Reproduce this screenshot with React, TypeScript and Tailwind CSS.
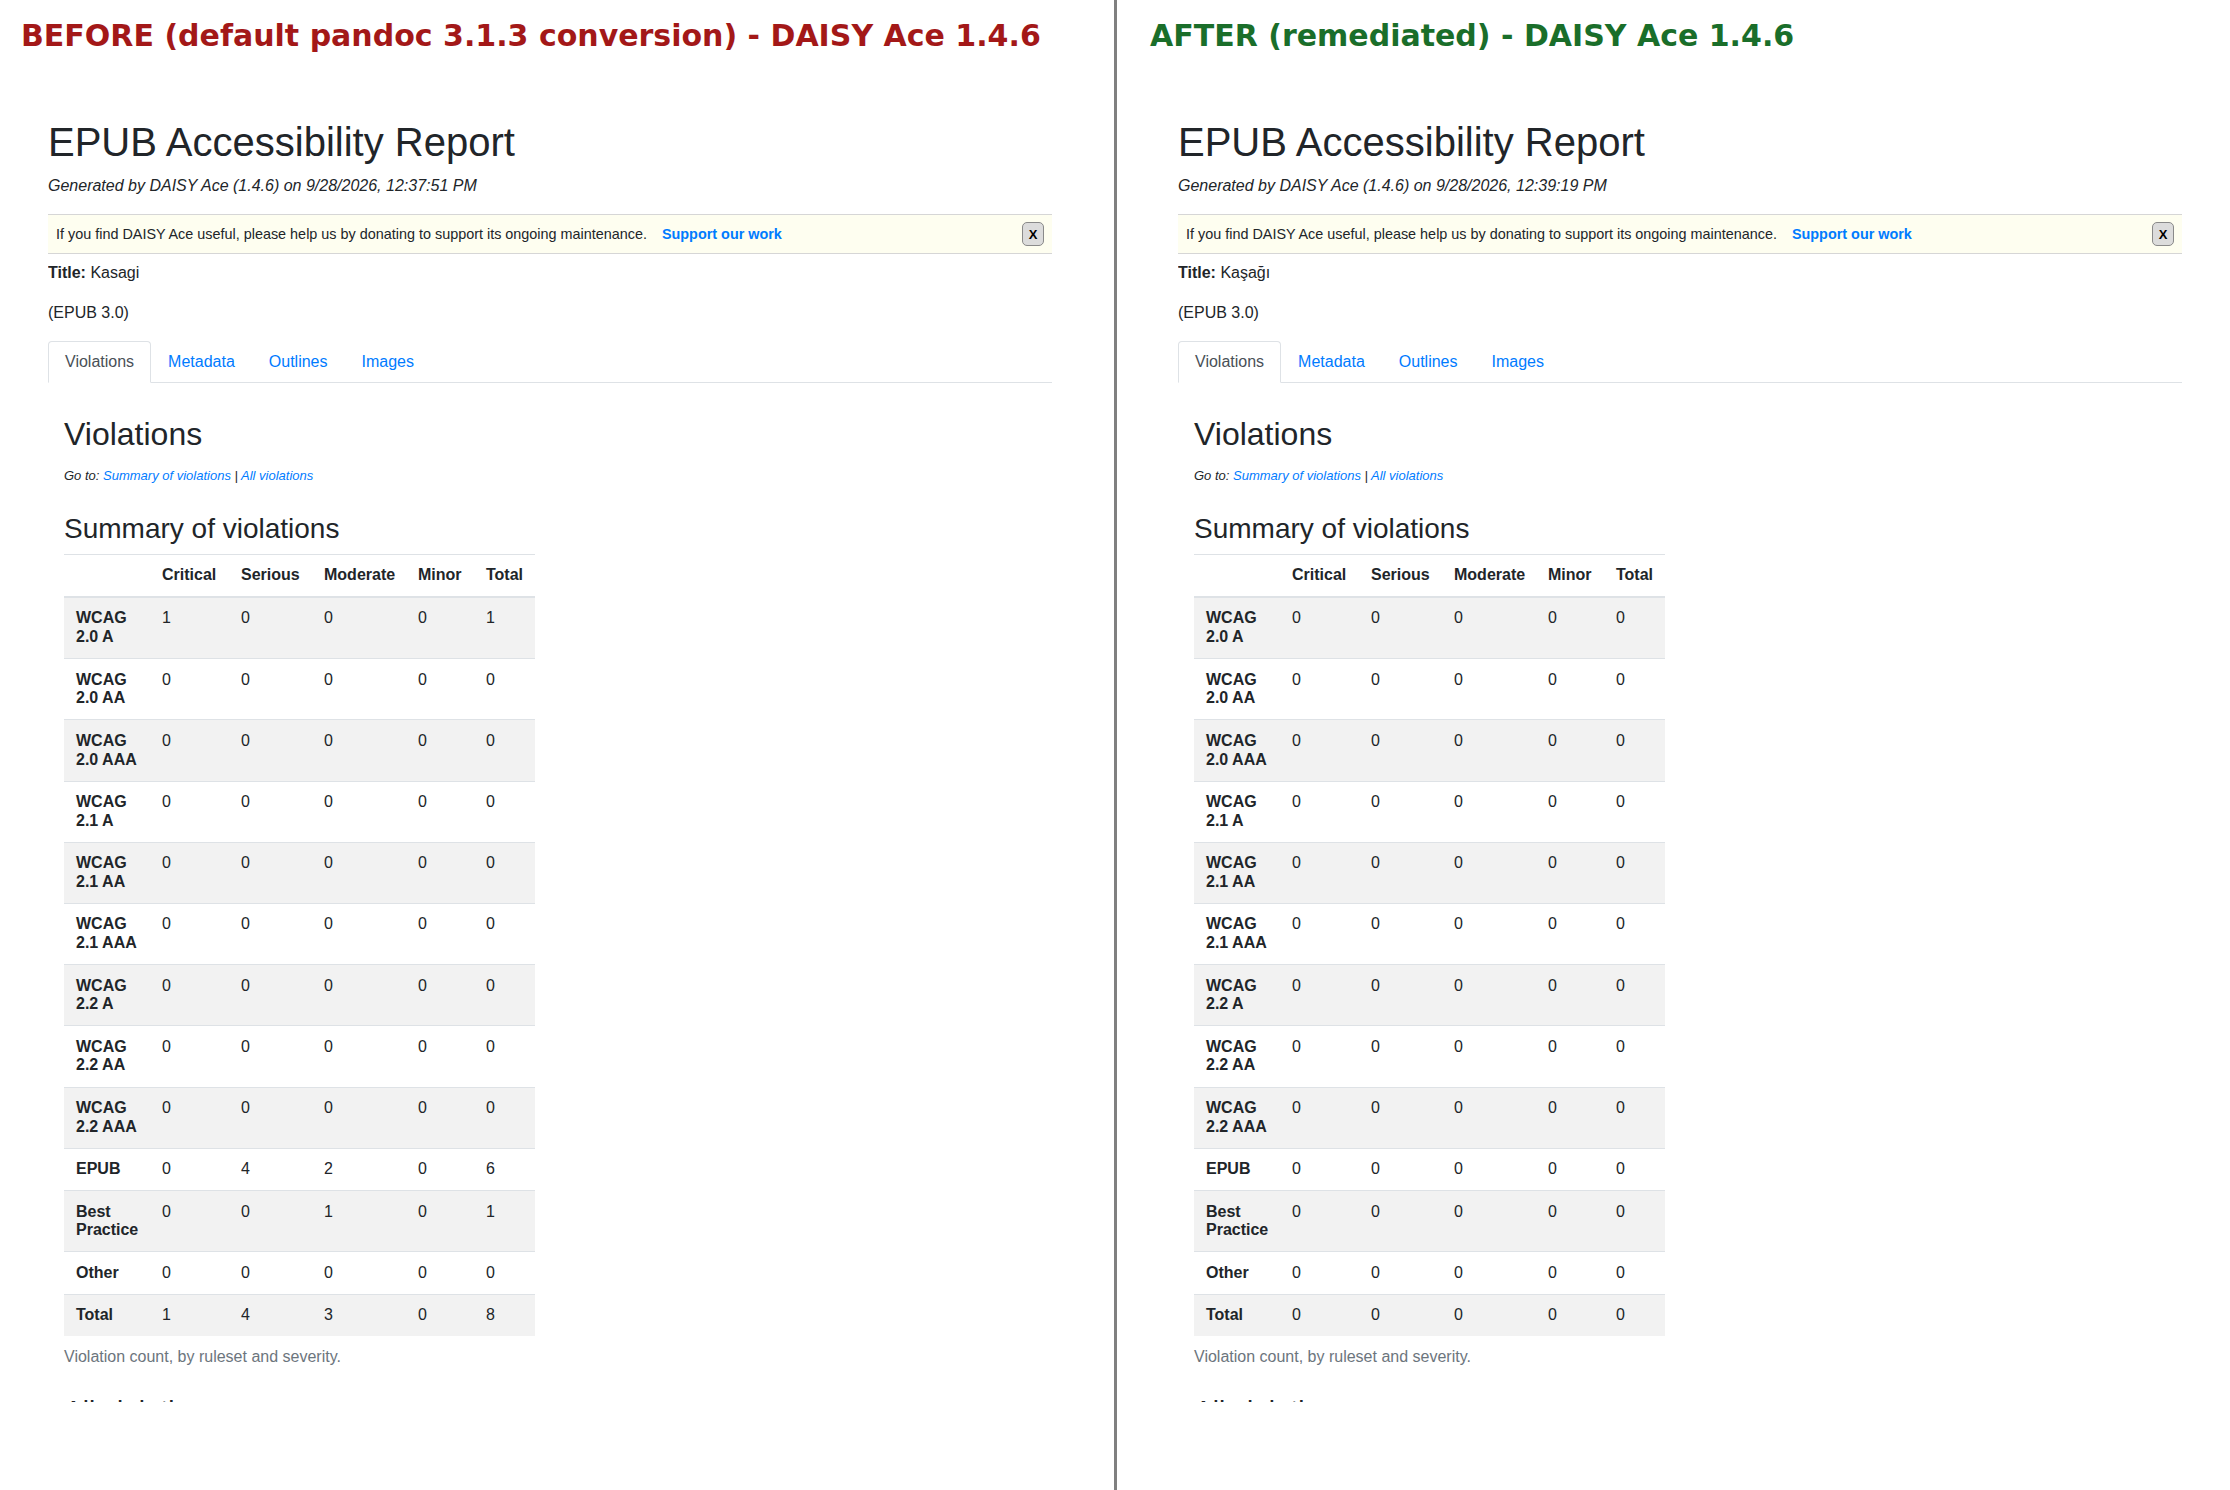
import React from 'react';

const rulesets = [
  'WCAG 2.0 A',
  'WCAG 2.0 AA',
  'WCAG 2.0 AAA',
  'WCAG 2.1 A',
  'WCAG 2.1 AA',
  'WCAG 2.1 AAA',
  'WCAG 2.2 A',
  'WCAG 2.2 AA',
  'WCAG 2.2 AAA',
  'EPUB',
  'Best Practice',
  'Other',
  'Total',
];

const zero = [0, 0, 0, 0, 0];

const beforeCounts: number[][] = [
  [1, 0, 0, 0, 1],
  zero, zero, zero, zero, zero, zero, zero, zero,
  [0, 4, 2, 0, 6],
  [0, 0, 1, 0, 1],
  zero,
  [1, 4, 3, 0, 8],
];

const afterCounts: number[][] = rulesets.map(() => zero);

const severities = ['Critical', 'Serious', 'Moderate', 'Minor', 'Total'];
const colWidths = ['w-[86px]', 'w-[79px]', 'w-[83px]', 'w-[94px]', 'w-[68px]', 'w-[61px]'];

function SummaryTable({ counts }: { counts: number[][] }) {
  return (
    <table className="w-[471px] table-fixed">
      <colgroup>
        {colWidths.map((w, i) => <col key={i} className={w} />)}
      </colgroup>
      <thead>
        <tr>
          <th className="border-t border-b-2 border-[#dee2e6] px-3 py-[11.4px] text-left leading-[18.7px]" />
          {severities.map(s => (
            <th key={s} className="border-t border-b-2 border-[#dee2e6] px-3 py-[11.4px] text-left font-bold leading-[18.7px]">{s}</th>
          ))}
        </tr>
      </thead>
      <tbody>
        {rulesets.map((name, i) => (
          <tr key={name} className={i % 2 === 0 ? 'bg-[#f2f2f2]' : 'bg-white'}>
            <th className="border-t border-[#dee2e6] px-3 py-[11.4px] text-left align-top font-bold leading-[18.7px]">{name}</th>
            {counts[i].map((n, j) => (
              <td key={j} className="border-t border-[#dee2e6] px-3 py-[11.4px] align-top leading-[18.7px]">{n}</td>
            ))}
          </tr>
        ))}
      </tbody>
    </table>
  );
}

function Report({ title, generated, counts }: { title: string; generated: string; counts: number[][] }) {
  return (
    <div className="h-[1349px] w-[1004px] overflow-hidden pt-[65px] font-['Liberation_Sans',Arial,sans-serif] text-[16px] leading-6 text-[#212529]">
      <h1 className="mb-2 text-[40px] font-normal leading-[48px]">EPUB Accessibility Report</h1>
      <p className="mb-4 italic">Generated by DAISY Ace (1.4.6) on {generated}</p>

      {/* donation banner */}
      <div className="flex h-[40px] items-center border-y border-[#d6d6d6] bg-[#fefef0] px-2 text-[14.4px]">
        <span>If you find DAISY Ace useful, please help us by donating to support its ongoing maintenance.</span>
        <a className="ml-[15px] font-bold text-[#007bff]">Support our work</a>
        <button className="ml-auto flex h-6 w-[22px] items-center justify-center rounded-[5px] border border-[#8a8a8a] bg-[#dcdcdc] text-[13px] font-bold leading-none text-black">
          X
        </button>
      </div>

      <p className="mt-[7px] mb-4"><b>Title:</b> {title}</p>
      <p className="mb-4">(EPUB 3.0)</p>

      {/* tabs */}
      <ul className="flex border-b border-[#dee2e6]">
        <li className="-mb-px rounded-t border border-[#dee2e6] border-b-white bg-white px-4 py-2 text-[#495057]">Violations</li>
        <li className="-mb-px border border-transparent px-4 py-2 text-[#007bff]">Metadata</li>
        <li className="-mb-px border border-transparent px-4 py-2 text-[#007bff]">Outlines</li>
        <li className="-mb-px border border-transparent px-4 py-2 text-[#007bff]">Images</li>
      </ul>

      <div className="px-4 pt-8">
        <h2 className="mb-[11px] text-[32px] font-normal leading-[38.4px]">Violations</h2>
        <p className="mb-[23.6px] text-[13px] italic">
          Go to: <a className="text-[#007bff]">Summary of violations</a> | <a className="text-[#007bff]">All violations</a>
        </p>
        <h3 className="mb-2 text-[28px] font-normal leading-[33.6px]">Summary of violations</h3>
        <SummaryTable counts={counts} />
        <div className="pt-3 leading-[18.4px] text-[#6c757d]">Violation count, by ruleset and severity.</div>
        <h3 className="mt-[27px] text-[28px] font-normal leading-[33.6px]">All violations</h3>
      </div>
    </div>
  );
}

export default function App() {
  return (
    <div className="flex h-[1490px] w-[2230px] overflow-hidden bg-white">
      <section className="w-[1114px] shrink-0 pl-[21px]">
        <h2 className="pt-[18px] font-['DejaVu_Sans',sans-serif] text-[30px] font-bold leading-[35px] text-[#a31818]">
          BEFORE (default pandoc 3.1.3 conversion) - DAISY Ace 1.4.6
        </h2>
        <div className="ml-[27px]">
          <Report title="Kasagi" generated="9/28/2026, 12:37:51 PM" counts={beforeCounts} />
        </div>
      </section>

      <div className="w-[3px] shrink-0 bg-[#808080]" />

      <section className="flex-1 pl-[33px]">
        <h2 className="pt-[18px] font-['DejaVu_Sans',sans-serif] text-[30px] font-bold leading-[35px] text-[#1a6e2a]">
          AFTER (remediated) - DAISY Ace 1.4.6
        </h2>
        <div className="ml-[28px]">
          <Report title="Kaşağı" generated="9/28/2026, 12:39:19 PM" counts={afterCounts} />
        </div>
      </section>
    </div>
  );
}
